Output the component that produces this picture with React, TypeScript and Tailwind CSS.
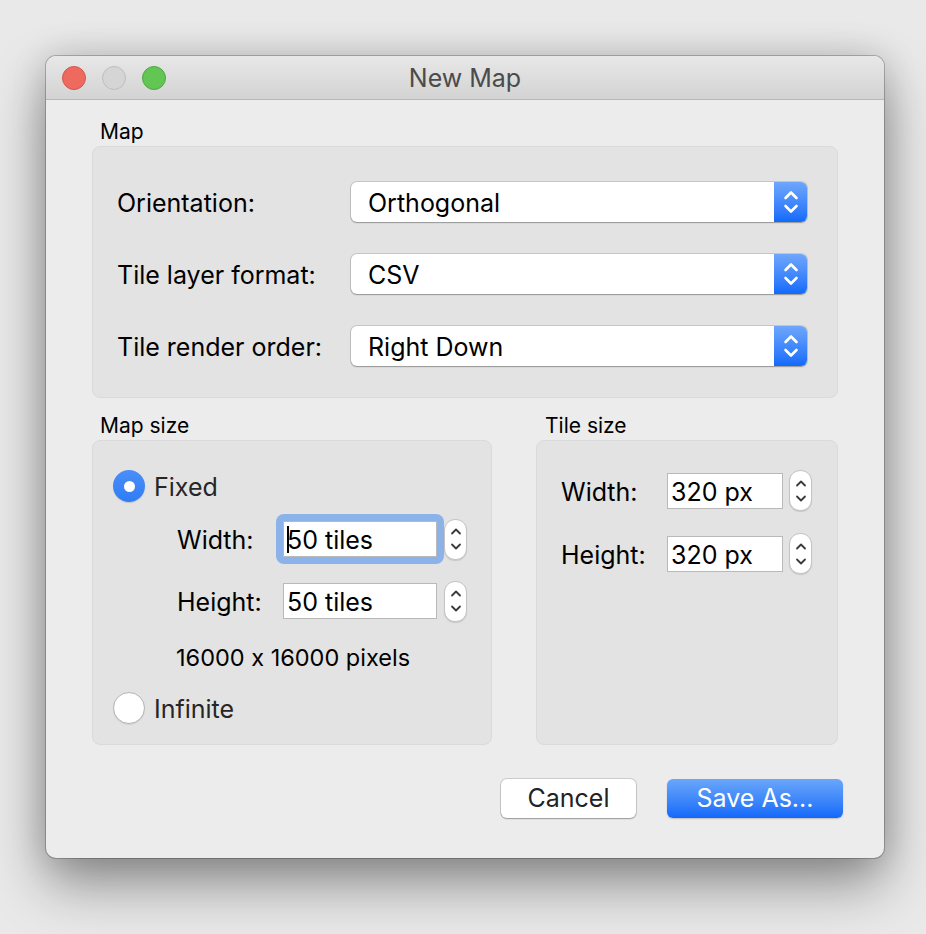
import React from "react";

const font = { fontFamily: "Inter, 'Noto Sans', 'Liberation Sans', sans-serif" };

function SelectChevrons() {
  return (
    <svg width="16" height="26" viewBox="0 0 16 26" fill="none">
      <path d="M2.5 9 L8 3.5 L13.5 9" stroke="white" strokeWidth="2.6" strokeLinecap="round" strokeLinejoin="round" />
      <path d="M2.5 17 L8 22.5 L13.5 17" stroke="white" strokeWidth="2.6" strokeLinecap="round" strokeLinejoin="round" />
    </svg>
  );
}

function Dropdown({ value }: { value: string }) {
  return (
    <div className="flex-1 h-[40px] flex rounded-[6px] bg-white shadow-[0_0_0_1px_rgba(0,0,0,0.12),0_1px_1.5px_rgba(0,0,0,0.25)] overflow-hidden">
      <div className="flex-1 flex items-center pl-[17px] pt-[4px] text-[25px] text-black">{value}</div>
      <div className="w-[33px] flex items-center justify-center bg-gradient-to-b from-[#6ea6fb] to-[#0f6afb]">
        <SelectChevrons />
      </div>
    </div>
  );
}

function Stepper() {
  return (
    <div className="w-[23px] h-[41px] rounded-[11px] bg-white border border-[#c4c4c4] shadow-[0_1px_1px_rgba(0,0,0,0.12)] flex items-center justify-center">
      <svg width="12" height="28" viewBox="0 0 12 28" fill="none">
        <path d="M2 8.5 L6 4.5 L10 8.5" stroke="#3a3a3a" strokeWidth="1.8" strokeLinecap="round" strokeLinejoin="round" />
        <path d="M2 19.5 L6 23.5 L10 19.5" stroke="#3a3a3a" strokeWidth="1.8" strokeLinecap="round" strokeLinejoin="round" />
      </svg>
    </div>
  );
}

function NumInput({ value, width, focused }: { value: string; width: string; focused?: boolean }) {
  return (
    <div className={"rounded-[8px] p-[7px] -m-[7px] " + (focused ? "bg-[#8bb3ea]" : "")}>
      <div className={"h-[36px] bg-white border border-[#b9b9b9] flex items-center pl-[3px] text-[25px] text-black " + width}>
        {focused && <span className="inline-block w-[2px] h-[27px] bg-black -mr-[2px]" />}
        <span className="pt-[4px]">{value}</span>
      </div>
    </div>
  );
}

function Radio({ checked }: { checked?: boolean }) {
  return checked ? (
    <div className="w-[32px] h-[32px] rounded-full bg-gradient-to-b from-[#4a8ff8] to-[#2f7cf6] flex items-center justify-center shadow-[0_1px_1px_rgba(0,0,0,0.15)]">
      <div className="w-[11px] h-[11px] rounded-full bg-white" />
    </div>
  ) : (
    <div className="w-[32px] h-[32px] rounded-full bg-white border border-[#b4b4b4] shadow-[0_1px_1px_rgba(0,0,0,0.08)]" />
  );
}

export default function App() {
  return (
    <div className="w-[926px] h-[934px] bg-[#e9e9e9] pt-[56px] pl-[46px] [font-feature-settings:'calt'_0]" style={font}>
      <div className="w-[838px] h-[802px] rounded-[10px] bg-[#ececec] flex flex-col overflow-hidden shadow-[0_0_0_1px_rgba(0,0,0,0.22),0_26px_55px_rgba(0,0,0,0.4),0_0_35px_rgba(0,0,0,0.15)]">
        {/* Title bar */}
        <div className="relative h-[44px] shrink-0 bg-gradient-to-b from-[#e8e8e8] to-[#d3d3d3] border-b border-[#b8b8b8] flex items-center justify-center">
          <div className="absolute left-[16px] top-[10px] flex gap-[16px]">
            <div className="w-[24px] h-[24px] rounded-full bg-[#ee6a5f] border border-[#d3564b]" />
            <div className="w-[24px] h-[24px] rounded-full bg-[#d5d5d5] border border-[#bdbdbd]" />
            <div className="w-[24px] h-[24px] rounded-full bg-[#62c554] border border-[#4ea843]" />
          </div>
          <div className="pt-[2px] text-[25px] text-[#4b4b4b]">New Map</div>
        </div>

        {/* Content */}
        <div className="flex-1 flex flex-col px-[46px]">
          <div className="pt-[19px] pb-[1px] pl-[8px] leading-[26px] text-[21px] text-black">Map</div>
          <div className="rounded-[8px] bg-[#e3e3e3] border border-[#dadada] pt-[35px] pb-[31px] pl-[24px] pr-[30px] flex flex-col gap-[32px]">
            {[
              ["Orientation:", "Orthogonal"],
              ["Tile layer format:", "CSV"],
              ["Tile render order:", "Right Down"],
            ].map(([label, value]) => (
              <div key={label} className="flex items-center h-[40px]">
                <div className="w-[234px] pt-[4px] text-[25px] text-black">{label}</div>
                <Dropdown value={value} />
              </div>
            ))}
          </div>

          <div className="flex gap-[44px] mt-[15px]">
            {/* Map size */}
            <div className="w-[400px] flex flex-col">
              <div className="pb-[1px] pl-[8px] leading-[26px] text-[21px] text-black">Map size</div>
              <div className="h-[305px] rounded-[8px] bg-[#e3e3e3] border border-[#dadada] pt-[29px] pl-[20px] flex flex-col">
                <div className="flex items-center h-[32px] gap-[9px]">
                  <Radio checked />
                  <span className="pt-[4px] text-[25px] text-[#262626]">Fixed</span>
                </div>
                <div className="flex items-center h-[50px] mt-[12px] pl-[64px]">
                  <div className="w-[106px] pt-[4px] text-[25px] text-black">Width:</div>
                  <NumInput value="50 tiles" width="w-[154px]" focused />
                  <div className="ml-[7px]">
                    <Stepper />
                  </div>
                </div>
                <div className="flex items-center h-[50px] mt-[12px] pl-[64px]">
                  <div className="w-[106px] pt-[4px] text-[25px] text-black">Height:</div>
                  <NumInput value="50 tiles" width="w-[154px]" />
                  <div className="ml-[7px]">
                    <Stepper />
                  </div>
                </div>
                <div className="mt-[19px] pl-[63px] leading-[26px] text-[23.5px] text-black">16000 x 16000 pixels</div>
                <div className="flex items-center h-[32px] gap-[9px] mt-[21px]">
                  <Radio />
                  <span className="pt-[4px] text-[25px] text-[#262626]">Infinite</span>
                </div>
              </div>
            </div>

            {/* Tile size */}
            <div className="flex-1 flex flex-col">
              <div className="pb-[1px] pl-[9px] leading-[26px] text-[21px] text-black">Tile size</div>
              <div className="h-[305px] rounded-[8px] bg-[#e3e3e3] border border-[#dadada] pt-[29px] pl-[24px] flex flex-col gap-[22px]">
                {["Width:", "Height:"].map((l) => (
                  <div key={l} className="flex items-center h-[41px]">
                    <div className="w-[106px] pt-[4px] text-[25px] text-black">{l}</div>
                    <NumInput value="320 px" width="w-[116px]" />
                    <div className="ml-[6px]">
                      <Stepper />
                    </div>
                  </div>
                ))}
              </div>
            </div>
          </div>

          <div className="flex justify-end gap-[31px] mt-[34px] -mr-[5px]">
            <button className="w-[135px] h-[39px] pt-[1px] rounded-[6px] bg-white text-[25px] text-[#222] shadow-[0_0_0_1px_rgba(0,0,0,0.13),0_1px_1.5px_rgba(0,0,0,0.25)]">
              Cancel
            </button>
            <button className="w-[176px] h-[39px] pt-[1px] rounded-[6px] bg-gradient-to-b from-[#6aa7fa] to-[#1168fa] text-[25px] text-white shadow-[0_1px_1.5px_rgba(0,0,0,0.2)]">
              Save As...
            </button>
          </div>
        </div>
      </div>
    </div>
  );
}
